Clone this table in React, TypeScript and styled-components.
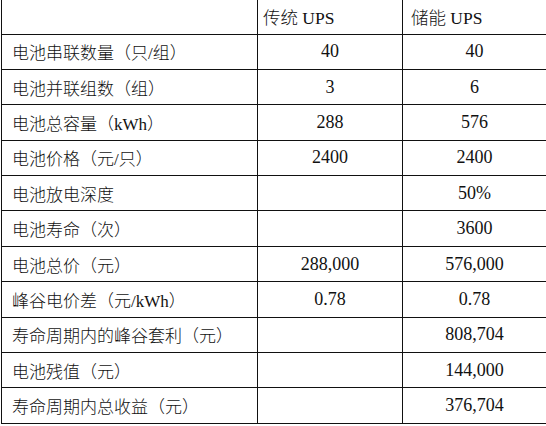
import { createGlobalStyle } from 'styled-components'
import styled from 'styled-components'

const GlobalStyle = createGlobalStyle`
  html, body {
    margin: 0;
    padding: 0;
    background: #fff;
  }
  body {
    font-family: 'Liberation Serif', 'Noto Sans CJK SC', serif;
    color: #111;
  }
`

type Row = {
  label: string
  ups: string
  storage: string
}

const rows: Row[] = [
  { label: '电池串联数量（只/组）', ups: '40', storage: '40' },
  { label: '电池并联组数（组）', ups: '3', storage: '6' },
  { label: '电池总容量（kWh）', ups: '288', storage: '576' },
  { label: '电池价格（元/只）', ups: '2400', storage: '2400' },
  { label: '电池放电深度', ups: '', storage: '50%' },
  { label: '电池寿命（次）', ups: '', storage: '3600' },
  { label: '电池总价（元）', ups: '288,000', storage: '576,000' },
  { label: '峰谷电价差（元/kWh）', ups: '0.78', storage: '0.78' },
  { label: '寿命周期内的峰谷套利（元）', ups: '', storage: '808,704' },
  { label: '电池残值（元）', ups: '', storage: '144,000' },
  { label: '寿命周期内总收益（元）', ups: '', storage: '376,704' },
]

const App = () => {
  return (
    <>
      <GlobalStyle />
      <Page>
        <Table>
          <colgroup>
            <col style={{ width: 256 }} />
            <col style={{ width: 145 }} />
            <col />
          </colgroup>
          <thead>
            <HeadRow>
              <LabelCell as="th" />
              <HeadCell>传统 UPS</HeadCell>
              <HeadCell $last>储能 UPS</HeadCell>
            </HeadRow>
          </thead>
          <tbody>
            {rows.map((row) => (
              <BodyRow key={row.label}>
                <LabelCell>{row.label}</LabelCell>
                <ValueCell>{row.ups}</ValueCell>
                <ValueCell $last>{row.storage}</ValueCell>
              </BodyRow>
            ))}
          </tbody>
        </Table>
      </Page>
    </>
  )
}

export default App

const Page = styled.div`
  width: 546px;
  height: 426px;
  padding-left: 1px;
  box-sizing: border-box;
  overflow: hidden;
`

const Table = styled.table`
  width: 545px;
  border-collapse: collapse;
  table-layout: fixed;
  font-size: 18px;
  font-weight: 300;
`

const HeadRow = styled.tr`
  height: 34px;
`

const BodyRow = styled.tr`
  height: 35.4px;
`

const LabelCell = styled.td`
  border-left: 1px solid #111;
  border-right: 1px solid #111;
  border-bottom: 1px solid #111;
  padding: 0 0 0 10px;
  text-align: left;
  font-size: 17px;
  font-weight: 300;
  white-space: nowrap;
  vertical-align: middle;
`

const HeadCell = styled.th<{ $last?: boolean }>`
  border-right: ${(p) => (p.$last ? 'none' : '1px solid #111')};
  border-bottom: 1px solid #111;
  padding: 0 0 0 ${(p) => (p.$last ? '8px' : '5px')};
  text-align: left;
  font-size: 17.5px;
  font-weight: 300;
  white-space: nowrap;
  vertical-align: middle;
`

const ValueCell = styled.td<{ $last?: boolean }>`
  border-right: ${(p) => (p.$last ? 'none' : '1px solid #111')};
  border-bottom: 1px solid #111;
  padding: 0;
  text-align: center;
  white-space: nowrap;
  vertical-align: middle;
`
